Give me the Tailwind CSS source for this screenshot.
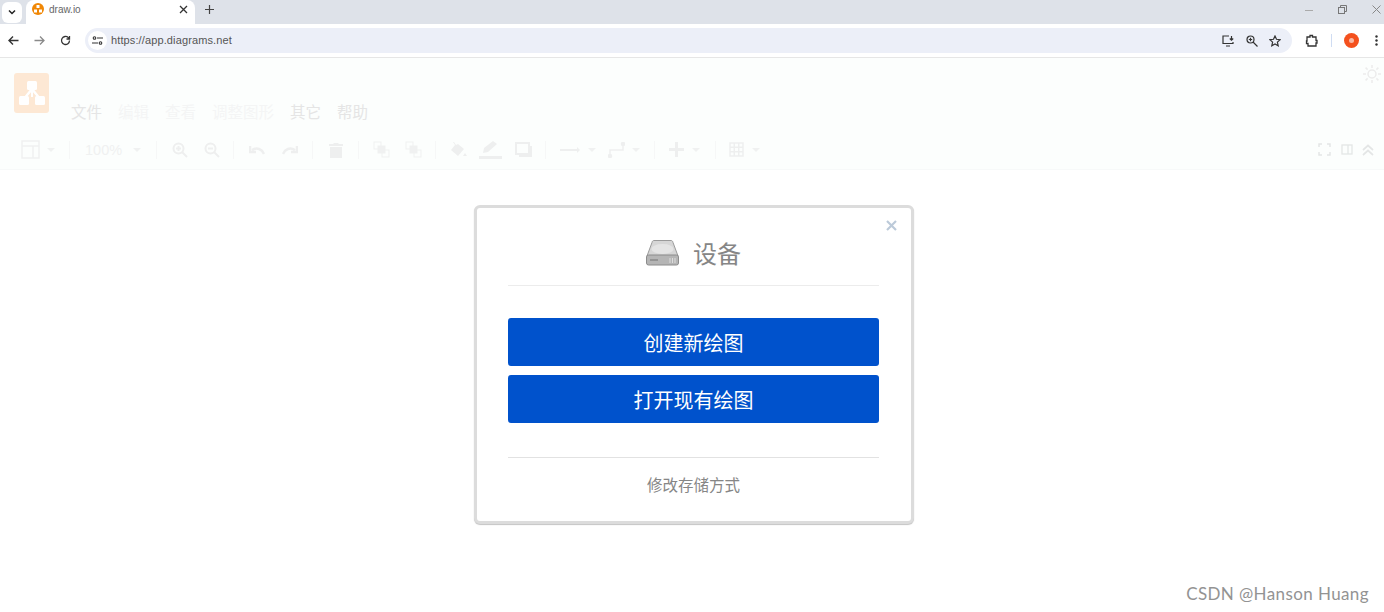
<!DOCTYPE html>
<html lang="zh-CN">
<head>
    <meta charset="UTF-8">
    <title>draw.io</title>
    <script src="https://cdn.jsdelivr.net/npm/@tailwindcss/browser@4"></script>
</head>
<body class="relative h-[612px] w-[1384px] overflow-hidden bg-white font-['Liberation_Sans','Noto_Sans_CJK_SC',sans-serif]">

    <!-- Tab strip -->
    <div class="flex h-[24px] items-end bg-[#dee2e9]">
        <div class="mb-[1px] ml-[2px] flex h-[21px] w-[20px] items-center justify-center rounded-[6px] bg-white pb-[2px]">
            <svg width="10" height="10" viewBox="0 0 10 10" fill="none" stroke="#222" stroke-width="1.5"><path d="M2 3.500l3 3 3-3"/></svg>
        </div>
        <div class="ml-[4px] flex h-[24px] w-[169px] items-center rounded-t-[8px] bg-white pb-[6px] pl-[6px] pr-[7px]">
            <svg width="12" height="12" viewBox="0 0 12 12"><circle cx="6" cy="6" r="6" fill="#f08705"/><rect x="4.500" y="2" width="3" height="3" fill="#fff"/><rect x="2" y="6.500" width="3" height="3" fill="#fff"/><rect x="7" y="6.500" width="3" height="3" fill="#fff"/></svg>
            <span class="ml-[5px] text-[10px] text-[#666]">draw.io</span>
            <svg class="ml-auto" width="9" height="9" viewBox="0 0 9 9" stroke="#333" stroke-width="1.300"><path d="M1 1l7 7M8 1l-7 7"/></svg>
        </div>
        <svg class="mb-[10px] ml-[10px]" width="9" height="9" viewBox="0 0 9 9" stroke="#444" stroke-width="1.200"><path d="M4.500 0v9M0 4.500h9"/></svg>
        <div class="mb-[10px] ml-auto flex items-center gap-[25px] pr-[3px]">
            <svg width="8" height="8" viewBox="0 0 8 8" stroke="#aaa" stroke-width="1"><path d="M0 4.500h8"/></svg>
            <svg width="9" height="9" viewBox="0 0 9 9" fill="none" stroke="#777" stroke-width="1"><rect x=".5" y="2.500" width="6" height="6"/><path d="M2.500 2.500v-2h6v6h-2"/></svg>
            <svg width="9" height="9" viewBox="0 0 9 9" stroke="#888" stroke-width="1"><path d="M.5.500l8 8M8.500.500l-8 8"/></svg>
        </div>
    </div>

    <!-- Browser toolbar -->
    <div class="flex h-[34px] items-center border-b border-[#e6e6e6] bg-white">
        <svg class="ml-[8px]" width="11" height="11" viewBox="0 0 11 11" fill="none" stroke="#333" stroke-width="1.400"><path d="M10.500 5.500H1M5 1.500l-4 4 4 4"/></svg>
        <svg class="ml-[15px]" width="11" height="11" viewBox="0 0 11 11" fill="none" stroke="#8a8a8a" stroke-width="1.300"><path d="M.5 5.500H10M6 1.500l4 4-4 4"/></svg>
        <svg class="ml-[15px]" width="11" height="11" viewBox="0 0 11 11" fill="none" stroke="#333" stroke-width="1.300"><path d="M9.500 5.500a4 4 0 1 1-1.200-2.900L9.500 4M9.500 1v3h-3"/></svg>
        <div class="ml-[14px] flex h-[25px] w-[1207px] items-center rounded-full bg-[#eceff8] pl-[3px] pr-[11px]">
            <div class="flex h-[19px] w-[19px] items-center justify-center rounded-full bg-white">
                <svg width="11" height="9" viewBox="0 0 11 9" fill="none" stroke="#333" stroke-width="1.100"><circle cx="2.500" cy="2" r="1.300"/><path d="M5 2h6M0 7h6"/><circle cx="8.500" cy="7" r="1.300"/></svg>
            </div>
            <span class="ml-[4px] text-[11px] tracking-[0.12px] text-[#555]">https://app.diagrams.net</span>
            <div class="ml-auto flex items-center gap-[11px]">
                <svg width="13" height="12" viewBox="0 0 13 12" fill="none" stroke="#333" stroke-width="1.200"><path d="M7 1H1v7.500h10V7M4 11h4M9.500 1v4M7.800 3.500l1.700 1.700 1.700-1.700"/></svg>
                <svg width="12" height="12" viewBox="0 0 12 12" fill="none" stroke="#333" stroke-width="1.200"><circle cx="4.500" cy="4.500" r="3.500"/><path d="M7 7l4.500 4.500M2.800 4.500h3.400M4.500 2.800v3.400"/></svg>
                <svg width="12" height="12" viewBox="0 0 12 12" fill="none" stroke="#333" stroke-width="1.200"><path d="M6 1l1.500 3.300 3.600.4-2.700 2.400.8 3.600L6 8.900l-3.200 1.800.8-3.600L.9 4.700l3.600-.4z"/></svg>
            </div>
        </div>
        <svg class="ml-[13px]" width="13" height="13" viewBox="0 0 13 13" fill="none" stroke="#333" stroke-width="1.300"><path d="M2 3h3V1.500h2.500V3H11v3.500h1V9h-1v3H3V9.500H1.500V7H2z"/></svg>
        <div class="ml-[13px] h-[13px] w-[1px] bg-[#cfdcf2]"></div>
        <div class="ml-[12px] flex h-[15px] w-[15px] items-center justify-center rounded-full bg-[#f4511e]">
            <div class="h-[5px] w-[5px] rounded-full bg-[#f9b9a5]"></div>
        </div>
        <svg class="ml-[16px]" width="3" height="11" viewBox="0 0 3 11" fill="#333"><circle cx="1.500" cy="1.500" r="1.200"/><circle cx="1.500" cy="5.500" r="1.200"/><circle cx="1.500" cy="9.500" r="1.200"/></svg>
    </div>

    <!-- draw.io header, faded behind the dialog -->
    <div class="relative h-[112px] border-b border-[#f7f9f9] bg-[#fcfefd]">
        <div class="flex h-[72px]">
            <div class="ml-[14px] mt-[15px] flex h-[40px] w-[35px] items-center justify-center rounded-[3px] bg-[#fde8d4]">
                <svg width="26" height="24" viewBox="0 0 26 24" fill="#fff"><rect x="8" y="0" width="10" height="9" rx="1.500"/><rect x="0" y="15" width="10" height="9" rx="1.500"/><rect x="16" y="15" width="10" height="9" rx="1.500"/><path d="M13 6l-8 10h3l5-6 5 6h3z"/><rect x="12" y="8" width="2" height="8"/></svg>
            </div>
            <div class="ml-[22px] mt-[45px] flex h-[20px] items-center gap-[16px] text-[15.5px]">
                <span class="text-[#e5e5e5]">文件</span>
                <span class="text-[#f4f5f5]">编辑</span>
                <span class="text-[#f4f5f5]">查看</span>
                <span class="text-[#f4f5f5]">调整图形</span>
                <span class="text-[#e5e5e5]">其它</span>
                <span class="text-[#e5e5e5]">帮助</span>
            </div>
            <svg class="ml-auto mr-[2px] mt-[6px]" width="20" height="20" viewBox="0 0 20 20" fill="none" stroke="#ececec" stroke-width="1.500"><circle cx="10" cy="10" r="4"/><path d="M10 1v3M10 16v3M1 10h3M16 10h3M3.600 3.600l2 2M14.400 14.400l2 2M3.600 16.400l2-2M14.400 5.600l2-2"/></svg>
        </div>

        <div class="flex h-[39px] items-center pl-[21px] pr-[10px]">
            <svg width="19" height="19" viewBox="0 0 19 19" fill="none" stroke="#f0f1f1" stroke-width="1.500"><rect x="1" y="1" width="17" height="17"/><path d="M1 6h17M12 6v12"/></svg>
            <div class="ml-[7px] h-0 w-0 border-x-[4px] border-t-[4px] border-x-transparent border-t-[#f0f1f1]"></div>
            <div class="ml-[14px] h-[18px] w-[1px] bg-[#f6f7f7]"></div>
            <span class="ml-[15px] mt-[2px] text-[14.5px] text-[#f0f1f1]">100%</span>
            <div class="ml-[11px] h-0 w-0 border-x-[4px] border-t-[4px] border-x-transparent border-t-[#f0f1f1]"></div>
            <div class="ml-[15px] h-[18px] w-[1px] bg-[#f6f7f7]"></div>
            <svg class="ml-[15px]" width="16" height="16" viewBox="0 0 16 16" fill="none" stroke="#eeefef" stroke-width="2"><circle cx="6.500" cy="6.500" r="5"/><path d="M10 10l5 5M4 6.500h5M6.500 4v5"/></svg>
            <svg class="ml-[16px]" width="16" height="16" viewBox="0 0 16 16" fill="none" stroke="#eeefef" stroke-width="2"><circle cx="6.500" cy="6.500" r="5"/><path d="M10 10l5 5M4 6.500h5"/></svg>
            <div class="ml-[13px] h-[18px] w-[1px] bg-[#f6f7f7]"></div>
            <svg class="ml-[15px]" width="16" height="10" viewBox="0 0 16 10" fill="none" stroke="#eeefef" stroke-width="2.500"><path d="M15 9C13 4 8 2 3 5M1 1v6h6"/></svg>
            <svg class="ml-[17px]" width="16" height="10" viewBox="0 0 16 10" fill="none" stroke="#eeefef" stroke-width="2.500"><path d="M1 9c2-5 7-7 12-4M15 1v6H9"/></svg>
            <div class="ml-[14px] h-[18px] w-[1px] bg-[#f6f7f7]"></div>
            <svg class="ml-[15px]" width="16" height="16" viewBox="0 0 16 16" fill="#eeefef"><path d="M1 2h4l1-1h4l1 1h4v2H1zM2 5h12v11H2z"/></svg>
            <div class="ml-[14px] h-[18px] w-[1px] bg-[#f6f7f7]"></div>
            <svg class="ml-[14px]" width="17" height="17" viewBox="0 0 17 17" fill="#f0f1f1" stroke="#f0f1f1"><rect x="1" y="1" width="7" height="7" fill="none"/><rect x="5" y="5" width="7" height="7"/><rect x="9" y="9" width="7" height="7" fill="none"/></svg>
            <svg class="ml-[15px]" width="17" height="17" viewBox="0 0 17 17" fill="#f0f1f1" stroke="#f0f1f1"><rect x="1" y="1" width="7" height="7" fill="none"/><rect x="5" y="5" width="7" height="7"/><rect x="9" y="9" width="7" height="7" fill="none"/></svg>
            <div class="ml-[13px] h-[18px] w-[1px] bg-[#f6f7f7]"></div>
            <svg class="ml-[14px]" width="17" height="16" viewBox="0 0 17 16" fill="#eeefef"><path d="M3 0l2 3-4 5 7 6 6-7-6-5-2 1-2-3z"/><path d="M15 11l2 3h-4z"/></svg>
            <svg class="ml-[12px]" width="23" height="19" viewBox="0 0 23 19" fill="#eeefef"><path d="M14 1l4 3-9 8-5 1 1-5z"/><rect y="16" width="23" height="3"/></svg>
            <svg class="ml-[13px]" width="17" height="15" viewBox="0 0 17 15" fill="none" stroke="#eeefef" stroke-width="2"><rect x="1" y="1" width="13" height="11"/><path d="M16 4v10H4"/></svg>
            <div class="ml-[13px] h-[18px] w-[1px] bg-[#f6f7f7]"></div>
            <svg class="ml-[14px]" width="20" height="6" viewBox="0 0 20 6" fill="#eeefef"><rect y="2" width="17" height="2"/><path d="M17 0l3 3-3 3z"/></svg>
            <div class="ml-[8px] h-0 w-0 border-x-[4px] border-t-[4px] border-x-transparent border-t-[#f0f1f1]"></div>
            <svg class="ml-[12px]" width="17" height="16" viewBox="0 0 17 16" fill="none" stroke="#eeefef" stroke-width="1.500"><path d="M2 14V8h13V2"/><circle cx="15" cy="2" r="1.500" fill="#eeefef"/><circle cx="2" cy="14" r="1.500" fill="#eeefef"/></svg>
            <div class="ml-[7px] h-0 w-0 border-x-[4px] border-t-[4px] border-x-transparent border-t-[#f0f1f1]"></div>
            <div class="ml-[14px] h-[18px] w-[1px] bg-[#f6f7f7]"></div>
            <svg class="ml-[14px]" width="15" height="15" viewBox="0 0 15 15" fill="#eeefef"><path d="M6 0h3v6h6v3H9v6H6V9H0V6h6z"/></svg>
            <div class="ml-[8px] h-0 w-0 border-x-[4px] border-t-[4px] border-x-transparent border-t-[#f0f1f1]"></div>
            <div class="ml-[15px] h-[18px] w-[1px] bg-[#f6f7f7]"></div>
            <svg class="ml-[13px]" width="15" height="15" viewBox="0 0 15 15" fill="none" stroke="#eeefef" stroke-width="1.500"><rect x="1" y="1" width="13" height="13"/><path d="M5.300 1v13M9.700 1v13M1 5.300h13M1 9.700h13"/></svg>
            <div class="ml-[8px] h-0 w-0 border-x-[4px] border-t-[4px] border-x-transparent border-t-[#f0f1f1]"></div>

            <svg class="ml-auto" width="13" height="13" viewBox="0 0 13 13" fill="none" stroke="#e4e6e6" stroke-width="1.500"><path d="M1 4V1h3M9 1h3v3M12 9v3H9M4 12H1V9"/></svg>
            <svg class="ml-[10px]" width="12" height="11" viewBox="0 0 12 11" fill="none" stroke="#e4e6e6" stroke-width="1.300"><rect x="1" y="1" width="10" height="9"/><path d="M7 1v9"/></svg>
            <svg class="ml-[9px]" width="12" height="12" viewBox="0 0 12 12" fill="none" stroke="#e4e6e6" stroke-width="1.700"><path d="M1 6l5-4.500L11 6M1 11l5-4.500 5 4.500"/></svg>
        </div>
    </div>

    <!-- Storage dialog -->
    <div class="absolute left-[474px] top-[205px] flex h-[319px] w-[440px] flex-col rounded-[6px] border-[3px] border-[#dcdcdc] bg-white pl-[31px] pr-[32px] shadow-[0_1px_1px_#c4c4c4]">
        <svg class="absolute right-[14px] top-[12px]" width="11" height="11" viewBox="0 0 11 11" stroke="#bccad9" stroke-width="2.200"><path d="M1 1l9 9M10 1l-9 9"/></svg>

        <div class="flex h-[78px] items-center justify-center border-b border-[#ececec] pt-[17px]">
            <svg class="mb-[5px]" width="33" height="26" viewBox="0 0 33 26">
                <path d="M6 2.500C6.300 1 7 .5 8 .5h17c1 0 1.700.5 2 2L32 16H1z" fill="#d6d6d6" stroke="#9a9a9a"/>
                <rect x=".5" y="15" width="32" height="10" rx="2" fill="#b5b5b5" stroke="#8c8c8c"/>
                <ellipse cx="16.500" cy="9" rx="11" ry="5" fill="#e4e4e4"/>
                <path d="M4 20h8" stroke="#8a8a8a" stroke-width="1.500"/>
                <path d="M24 18v5M26.500 18v5M29 18v5" stroke="#dcdcdc"/>
            </svg>
            <span class="ml-[14px] text-[24px] text-[#868686]">设备</span>
        </div>

        <button class="mt-[32px] h-[48px] rounded-[3px] bg-[#0052cc] pt-[3px] text-[20px] text-white">创建新绘图</button>
        <button class="mt-[9px] h-[48px] rounded-[3px] bg-[#0052cc] pt-[3px] text-[20px] text-white">打开现有绘图</button>

        <div class="mt-[34px] h-[1px] bg-[#e2e2e2]"></div>
        <div class="mt-[18px] text-center text-[15.5px] leading-[20px] text-[#868686]">修改存储方式</div>
    </div>

    <!-- Watermark -->
    <div class="absolute bottom-[6px] right-[15px] font-['Lato','Noto_Sans',sans-serif] text-[17px] tracking-[0.4px] text-[#939393]">CSDN @Hanson Huang</div>

</body>
</html>
